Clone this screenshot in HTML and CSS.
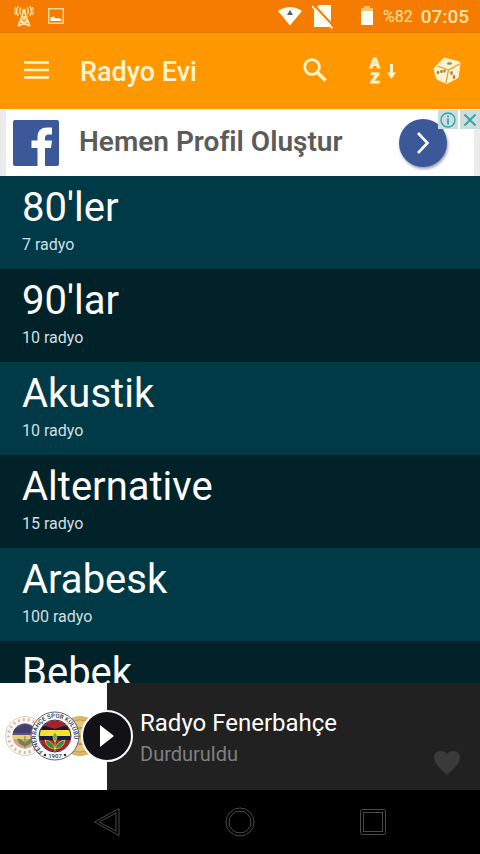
FILE: index.html
```html
<!DOCTYPE html>
<html lang="tr">
<head>
  <meta charset="UTF-8" />
  <meta name="viewport" content="width=device-width, initial-scale=1.0"/>
  <title>Radyo Evi</title>
  <link rel="stylesheet" href="styles.css">
</head>
<body>
  <div class="status-bar">
    <svg class="status-antenna" width="20" height="22" viewBox="0 0 20 22" fill="none" stroke="currentColor" stroke-width="1.5">
      <path d="M7 2.500Q4.500 6 7 9.500M13 2.500Q15.500 6 13 9.500M4.200 1.200Q.8 6 4.200 11M15.800 1.200Q19.200 6 15.800 11"/>
      <path d="M1.500 2Q-.3 6 1.500 10M18.500 2Q20.300 6 18.500 10" stroke-width="1"/>
      <circle cx="10" cy="6" r="2" fill="currentColor" stroke="none"/>
      <path d="M10 6L4 21M10 6L16 21M8 12H12L6 17H14L4 21M8 12L14 17M6 17L16 21"/>
    </svg>
    <svg class="status-image" width="16" height="16" viewBox="0 0 16 16">
      <rect x=".75" y=".75" width="14.500" height="14.500" fill="none" stroke="currentColor" stroke-width="1.300"/>
      <path d="M2.500 13V9.500L5.500 8.500L8 10.500L11 10L13.500 11.500V13Z" fill="#fffdf0"/>
    </svg>
    <svg class="status-wifi" width="24" height="20" viewBox="0 0 24 20">
      <path d="M0 5Q12-3 24 5L12 19.500Z" fill="#fffdf0"/>
      <path d="M12 4L15 9H9Z" fill="#56606a"/>
    </svg>
    <svg class="status-sim" width="22" height="25" viewBox="0 0 22 25">
      <path d="M7 1H19V23H2V6Z" fill="#fffdf0"/>
      <path d="M2 1L22 22.500" stroke="#f57c00" stroke-width="2"/>
      <path d="M0 2L20.500 24.500" stroke="#fff3cf" stroke-width="1.800"/>
    </svg>
    <svg class="status-battery" width="14" height="20" viewBox="0 0 14 20">
      <path d="M4 0H10V2H13V5H1V2H4Z" fill="#ffc266"/>
      <path d="M1 5H13V19H1Z" fill="#fffdf0"/>
    </svg>
    <span class="status-percent">%82</span>
    <span class="status-time">07:05</span>
  </div>

  <header class="toolbar">
    <button class="tool menu" aria-label="Menü">
      <svg width="26" height="20" viewBox="0 0 26 20" stroke="currentColor" stroke-width="2.500">
        <path d="M0 1.500H25M0 9H25M0 16.500H25"/>
      </svg>
    </button>
    <h1>Radyo Evi</h1>
    <button class="tool" aria-label="Ara">
      <svg width="26" height="26" viewBox="0 0 26 26" fill="none" stroke="currentColor">
        <circle cx="10" cy="9" r="7.300" stroke-width="2.800"/>
        <path d="M15.500 14.500L23.500 22.500" stroke-width="3.600"/>
      </svg>
    </button>
    <button class="tool" aria-label="Sırala">
      <svg class="sort-icon" width="32" height="40" viewBox="0 0 32 40">
        <text x="10" y="17" text-anchor="middle">A</text>
        <text x="10" y="32" text-anchor="middle">Z</text>
        <path d="M25 13H28V21.500H31L26.500 28L22 21.500H25Z" fill="currentColor"/>
      </svg>
    </button>
    <button class="tool" aria-label="Rastgele">
      <svg width="28" height="28" viewBox="0 0 28 28">
        <path d="M11 1L25 4.500Q27 5 27 7L25 20.500L14 26.500L4.500 22.500Q3.500 22 3 20L1 11.500Z" fill="currentColor" stroke="currentColor" stroke-linejoin="round"/>
        <path d="M4.500 9L15.500 13L26.500 7M15.500 13L13 26" fill="none" stroke="#e99a2c" stroke-width="1.300"/>
        <g fill="#a87d42">
          <ellipse cx="16.500" cy="6.500" rx="2.500" ry="1.300"/>
          <ellipse cx="5" cy="15.500" rx="1.300" ry="1.800"/>
          <ellipse cx="8.500" cy="14.500" rx="1.300" ry="1.800"/>
          <ellipse cx="11.500" cy="14" rx="1.200" ry="1.700"/>
          <ellipse cx="18.500" cy="16" rx="1.300" ry="2"/>
          <ellipse cx="21" cy="20" rx="1.300" ry="2"/>
        </g>
      </svg>
    </button>
  </header>

  <aside class="ad">
    <a class="ad-link" href="#">
      <svg class="fb-logo" width="46" height="46" viewBox="0 0 46 46">
        <rect width="46" height="46" rx="2" fill="#3b5998"/>
        <path d="M24.500 46V28H18.500V20.500H24.500V17Q24.500 7.500 34 7.500H39V14.500H35.500Q32 14.500 32 18V20.500H39L38 28H32V46Z" fill="#fff"/>
      </svg>
      <span class="ad-text">Hemen Profil Oluştur</span>
      <span class="ad-go">
        <svg width="14" height="24" viewBox="0 0 14 24" fill="none" stroke="#fff" stroke-width="2.600">
          <path d="M2 2L11.500 12L2 22"/>
        </svg>
      </span>
    </a>
    <div class="ad-choices">
      <button aria-label="Reklam bilgisi">
        <svg width="16" height="16" viewBox="0 0 16 16" fill="none" stroke="currentColor">
          <circle cx="8" cy="8" r="7" stroke-width="1.400"/>
          <path d="M8 3.500V5.200M8 6.500V12.500" stroke-width="1.800"/>
        </svg>
      </button>
      <button aria-label="Reklamı kapat">
        <svg width="14" height="14" viewBox="0 0 14 14" stroke="currentColor" stroke-width="1.800">
          <path d="M1.500 1.500L12.500 12.500M12.500 1.500L1.500 12.500"/>
        </svg>
      </button>
    </div>
  </aside>

  <main>
    <ul class="genres">
      <li><a href="#"><h2>80'ler</h2><p>7 radyo</p></a></li>
      <li><a href="#"><h2>90'lar</h2><p>10 radyo</p></a></li>
      <li><a href="#"><h2>Akustik</h2><p>10 radyo</p></a></li>
      <li><a href="#"><h2>Alternative</h2><p>15 radyo</p></a></li>
      <li><a href="#"><h2>Arabesk</h2><p>100 radyo</p></a></li>
      <li><a href="#"><h2>Bebek</h2></a></li>
    </ul>
  </main>

  <section class="player">
    <div class="cover">
      <svg width="107" height="107" viewBox="0 0 107 107">
        <defs>
          <path id="ring" d="M43 68.500A19 19 0 1 1 67 68.500"/>
          <clipPath id="shield"><circle cx="55" cy="53" r="15.500"/></clipPath>
          <clipPath id="shield-left"><circle cx="25" cy="53" r="12.500"/></clipPath>
        </defs>
        <!-- old crest -->
        <circle cx="25" cy="53" r="19.500" fill="#fbf8f2" stroke="#d8d2c8"/>
        <circle cx="25" cy="53" r="16.500" fill="none" stroke="#d6b9a8" stroke-width="3" stroke-dasharray="2 3"/>
        <g clip-path="url(#shield-left)">
          <rect x="12" y="40" width="26" height="26" fill="#d9a092"/>
          <path d="M12 40H38V52H12Z" fill="#5b5687"/>
          <path d="M12 47L25 41L38 47V50H12Z" fill="#43406e"/>
          <path d="M12 52H38V56H12Z" fill="#e9d36e"/>
          <path d="M25 53V66M25 63Q18 61 18 56Q24 57 25 63Q26 57 32 56Q32 61 25 63" fill="#6d8650" stroke="#6d8650"/>
        </g>
        <!-- gold crest -->
        <circle cx="80" cy="53" r="20" fill="#d9b865"/>
        <circle cx="80" cy="53" r="16" fill="#e2c67c" stroke="#c49c45"/>
        <path d="M72 45H92M72 53H92M72 61H92" stroke="#c49c45" stroke-width="2"/>
        <!-- main crest -->
        <circle cx="55" cy="53" r="24" fill="#fff" stroke="#5c6075"/>
        <g clip-path="url(#shield)">
          <rect x="39" y="37" width="32" height="32" fill="#a8202b"/>
          <path d="M39 44L46 43L55 46L64 43L71 44V49H39Z" fill="#12183d"/>
          <path d="M39 47H71V53H39Z" fill="#f5e02c"/>
          <path d="M39 53H71V57H39Z" fill="#141c4a"/>
          <path d="M55 50V68M55 66Q46 65 45 57Q53 58 55 66Q57 58 65 57Q64 65 55 66M55 59Q51 54 55 49Q59 54 55 59" fill="#378a3b" stroke="#dbe66a" stroke-width=".7"/>
        </g>
        <circle cx="55" cy="53" r="16" fill="none" stroke="#4c202e"/>
        <text class="crest-text"><textPath href="#ring">FENERBAHÇE SPOR KULÜBÜ</textPath></text>
        <text class="crest-text" x="55" y="75" text-anchor="middle">1907</text>
        <circle cx="45" cy="72" r="1.300" fill="#2b3047"/>
        <circle cx="65" cy="72" r="1.300" fill="#2b3047"/>
      </svg>
      <button class="play" aria-label="Oynat">
        <svg width="16" height="22" viewBox="0 0 16 22"><path d="M1 0L15 11L1 22Z" fill="#fff"/></svg>
      </button>
    </div>
    <div class="now-playing">
      <h3>Radyo Fenerbahçe</h3>
      <p>Durduruldu</p>
    </div>
    <button class="favorite" aria-label="Favori">
      <svg width="28" height="26" viewBox="0 0 28 26">
        <path d="M14 25L12 23Q1 14 1 8Q1 1 8 1Q12 1 14 4Q16 1 20 1Q27 1 27 8Q27 14 16 23Z" fill="#3a3a3a"/>
      </svg>
    </button>
  </section>

  <nav class="nav-bar">
    <button aria-label="Geri">
      <svg width="28" height="30" viewBox="0 0 28 30" fill="none" stroke="currentColor" stroke-linejoin="round">
        <path d="M1.500 15L26 1.500V28.500Z"/>
        <path d="M6 15L23 6V24Z"/>
      </svg>
    </button>
    <button aria-label="Ana ekran">
      <svg width="30" height="30" viewBox="0 0 30 30" fill="none" stroke="currentColor">
        <circle cx="15" cy="15" r="14"/>
        <circle cx="15" cy="15" r="11"/>
      </svg>
    </button>
    <button aria-label="Son uygulamalar">
      <svg width="28" height="28" viewBox="0 0 28 28" fill="none" stroke="currentColor">
        <rect x="1.500" y="1.500" width="25" height="25" rx="2"/>
        <rect x="4.500" y="4.500" width="19" height="19"/>
      </svg>
    </button>
  </nav>
</body>
</html>
```
FILE: styles.css
```css
:root {
  --orange: #ff9800;
  --orange-dark: #f57c00;
  --cream: #fff3cf;
  --row: #003a47;
  --row-alt: #02222a;
  --player: #212121;
}

* {
  box-sizing: border-box;
}

body {
  margin: 0;
  height: 100vh;
  display: flex;
  flex-direction: column;
  background: #000;
  font-family: Roboto, "Noto Sans", sans-serif;
}

h1, h2, h3, p, ul {
  margin: 0;
  padding: 0;
  font-weight: 400;
}

button {
  display: flex;
  align-items: center;
  justify-content: center;
  padding: 0;
  border: none;
  background: none;
  color: inherit;
  cursor: pointer;
}

a {
  color: inherit;
  text-decoration: none;
}

svg {
  display: block;
  flex-shrink: 0;
}

.status-bar {
  display: flex;
  align-items: center;
  height: 33px;
  padding: 0 11px 0 14px;
  background: var(--orange-dark);
  border-bottom: 1px solid #e57a08;
  color: #ffe3a8;
  flex-shrink: 0;
}

.status-image {
  margin-left: 14px;
}

.status-wifi {
  margin-left: auto;
}

.status-sim {
  margin: 0 26px 0 10px;
}

.status-percent {
  margin: 0 8px 0 9px;
  font-size: 16px;
}

.status-time {
  font-size: 19px;
  font-weight: 500;
}

.toolbar {
  display: flex;
  align-items: center;
  height: 76px;
  background: var(--orange);
  color: var(--cream);
  flex-shrink: 0;
}

.toolbar h1 {
  flex: 1;
  padding: 2px 0 0 6px;
  font-size: 27px;
  font-weight: 500;
}

.tool {
  width: 66px;
  height: 66px;
}

.menu {
  width: 74px;
}

.sort-icon text {
  fill: currentColor;
  stroke: currentColor;
  font-size: 15px;
  font-weight: 900;
}

.ad {
  position: relative;
  flex-shrink: 0;
  padding: 0 6px;
  background: #ebebeb;
  border-top: 1px solid #fff3cf;
}

.ad-link {
  display: flex;
  align-items: center;
  height: 66px;
  padding: 0 27px 0 7px;
  background: #fff;
}

.ad-text {
  flex: 1;
  margin-left: 20px;
  padding-bottom: 4px;
  color: #5b5b5b;
  font-size: 28px;
  font-weight: 600;
}

.ad-go {
  display: flex;
  align-items: center;
  justify-content: center;
  width: 48px;
  height: 48px;
  border-radius: 50%;
  background: #3b5998;
  box-shadow: 1px 2px 3px rgba(0, 0, 60, 0.4);
}

.ad-choices {
  position: absolute;
  top: 0;
  right: 0;
  display: flex;
  gap: 2px;
  color: #2aa7a9;
}

.ad-choices button {
  width: 20px;
  height: 19px;
  background: #cfdcde;
}

main {
  flex: 1;
  min-height: 0;
  overflow: hidden;
}

.genres {
  list-style: none;
}

.genres li {
  height: 93px;
  padding: 8px 22px;
  background: var(--row);
  color: #fff;
}

.genres li:nth-child(even) {
  background: var(--row-alt);
}

.genres h2 {
  font-size: 40px;
  line-height: 48px;
}

.genres p {
  margin-top: 3px;
  color: #d3dfe2;
  font-size: 16px;
  line-height: 20px;
}

.player {
  display: flex;
  height: 107px;
  background: var(--player);
  flex-shrink: 0;
}

.cover {
  position: relative;
  width: 107px;
  background: #fff;
}

.crest-text {
  fill: #2b3047;
  font-size: 6px;
  font-weight: 500;
}

.play {
  position: absolute;
  top: 27px;
  right: -26px;
  width: 52px;
  height: 52px;
  border: 2px solid #fff;
  border-radius: 50%;
  background: #111116;
}

.now-playing {
  flex: 1;
  padding: 24px 0 0 33px;
}

.now-playing h3 {
  color: #fff;
  font-size: 24px;
  line-height: 32px;
}

.now-playing p {
  color: #808080;
  font-size: 20px;
  line-height: 30px;
}

.favorite {
  align-self: flex-end;
  width: 66px;
  height: 54px;
}

.nav-bar {
  display: grid;
  grid-template-columns: repeat(3, 1fr);
  height: 64px;
  padding: 0 40px;
  color: #4a4a4a;
  flex-shrink: 0;
}
```
